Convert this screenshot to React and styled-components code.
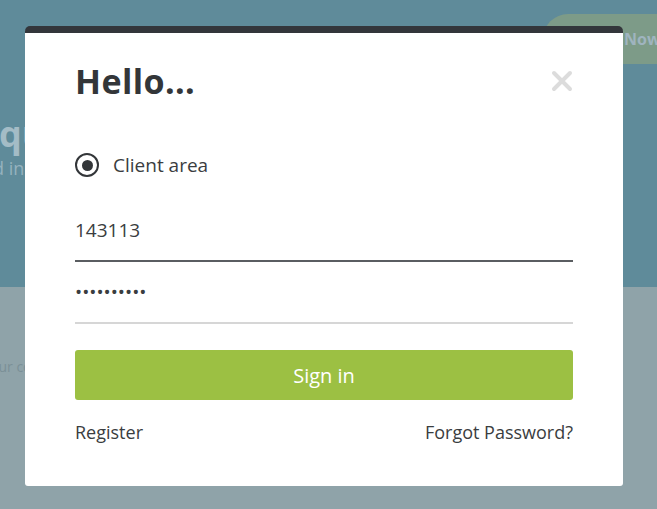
import React from 'react';
import styled, { createGlobalStyle } from 'styled-components';

const GlobalStyle = createGlobalStyle`
  html, body {
    margin: 0;
    padding: 0;
    overflow: hidden;
    background: #8fa3a9;
    font-family: 'Open Sans', 'Noto Sans', sans-serif;
  }
  * { box-sizing: border-box; }
`;

const Page = styled.div`
  position: relative;
  width: 657px;
  height: 509px;
  overflow: hidden;
`;

const Hero = styled.section`
  height: 287px;
  background: #5f8b9a;
  display: flex;
  flex-direction: column;
`;

const Header = styled.header`
  display: flex;
  justify-content: flex-end;
  padding-top: 14px;
  margin-right: -40px;
`;

const BookButton = styled.div`
  width: 154px;
  height: 50px;
  border-radius: 25px;
  background: #7d9b88;
  color: #9fb4bf;
  font-weight: 700;
  font-size: 16px;
  display: flex;
  align-items: center;
  justify-content: center;
`;

const HeroTitle = styled.h1`
  margin: 48px 0 0 -1px;
  font-size: 36px;
  font-weight: 700;
  color: #a4bcc6;
  line-height: 44px;
`;

const HeroText = styled.p`
  margin: 0 0 0 -28px;
  font-size: 18px;
  color: #95b2be;
`;

const Content = styled.section`
  padding-top: 70px;
`;

const ContentText = styled.p`
  margin: 0 0 0 -17px;
  font-size: 14px;
  color: #7b9097;
`;

const Modal = styled.div`
  position: absolute;
  left: 25px;
  top: 26px;
  width: 598px;
  height: 460px;
  background: #fff;
  border-top: 7px solid #33363b;
  border-radius: 5px 5px 3px 3px;
  padding: 28px 50px 0;
  display: flex;
  flex-direction: column;
  color: #333639;
`;

const TitleRow = styled.div`
  display: flex;
  align-items: center;
  justify-content: space-between;
`;

const Title = styled.h2`
  margin: 0;
  font-size: 34px;
  line-height: 40px;
  font-weight: 700;
  letter-spacing: 0.4px;
  color: #333639;
`;

const Close = styled.button`
  border: 0;
  background: none;
  padding: 0;
  width: 22px;
  height: 22px;
  cursor: pointer;
  display: flex;
`;

const RadioRow = styled.label`
  margin-top: 51px;
  display: flex;
  align-items: center;
  gap: 14px;
  height: 26px;
  font-size: 19px;
  color: #3a3d40;
`;

const RadioMark = styled.span`
  width: 24px;
  height: 24px;
  border-radius: 50%;
  border: 2.5px solid #333639;
  display: flex;
  align-items: center;
  justify-content: center;
  &::after {
    content: '';
    width: 11px;
    height: 11px;
    border-radius: 50%;
    background: #333639;
  }
`;

const Input = styled.input`
  display: block;
  width: 100%;
  height: 49px;
  margin-top: ${p => p.$gap}px;
  padding: 0 0 13px;
  border: 0;
  border-bottom: 2px solid ${p => (p.$active ? '#5a5d61' : '#d6d6d6')};
  outline: none;
  font-family: 'Open Sans', sans-serif;
  font-size: 19px;
  color: #3a3d40;
  background: transparent;
`;

const SignIn = styled.button`
  margin-top: 26px;
  height: 50px;
  width: 100%;
  border: 0;
  border-radius: 3px;
  background: #9cc043;
  color: #fff;
  font-family: 'Open Sans', sans-serif;
  font-size: 20px;
  cursor: pointer;
`;

const Links = styled.div`
  margin-top: 20px;
  display: flex;
  justify-content: space-between;
  font-size: 18px;
  line-height: 24px;
`;

const Link = styled.a`
  color: #3a3d40;
  text-decoration: none;
`;

export default function App() {
  return (
    <>
      <GlobalStyle />
      <Page>
        <Hero>
          <Header>
            <BookButton>Book Now</BookButton>
          </Header>
          <HeroTitle>quality rooms</HeroTitle>
          <HeroText>and in the city</HeroText>
        </Hero>
        <Content>
          <ContentText>your comfort first</ContentText>
        </Content>

        <Modal>
          <TitleRow>
            <Title>Hello...</Title>
            <Close aria-label="Close">
              <svg width="22" height="22" viewBox="0 0 22 22">
                <path d="M3 3L19 19M19 3L3 19" stroke="#dcdcdc" strokeWidth="4" strokeLinecap="round" />
              </svg>
            </Close>
          </TitleRow>
          <RadioRow>
            <RadioMark />
            Client area
          </RadioRow>
          <Input $gap={35} $active defaultValue="143113" />
          <Input $gap={13} type="password" defaultValue="••••••••••" />
          <SignIn>Sign in</SignIn>
          <Links>
            <Link href="#">Register</Link>
            <Link href="#">Forgot Password?</Link>
          </Links>
        </Modal>
      </Page>
    </>
  );
}
